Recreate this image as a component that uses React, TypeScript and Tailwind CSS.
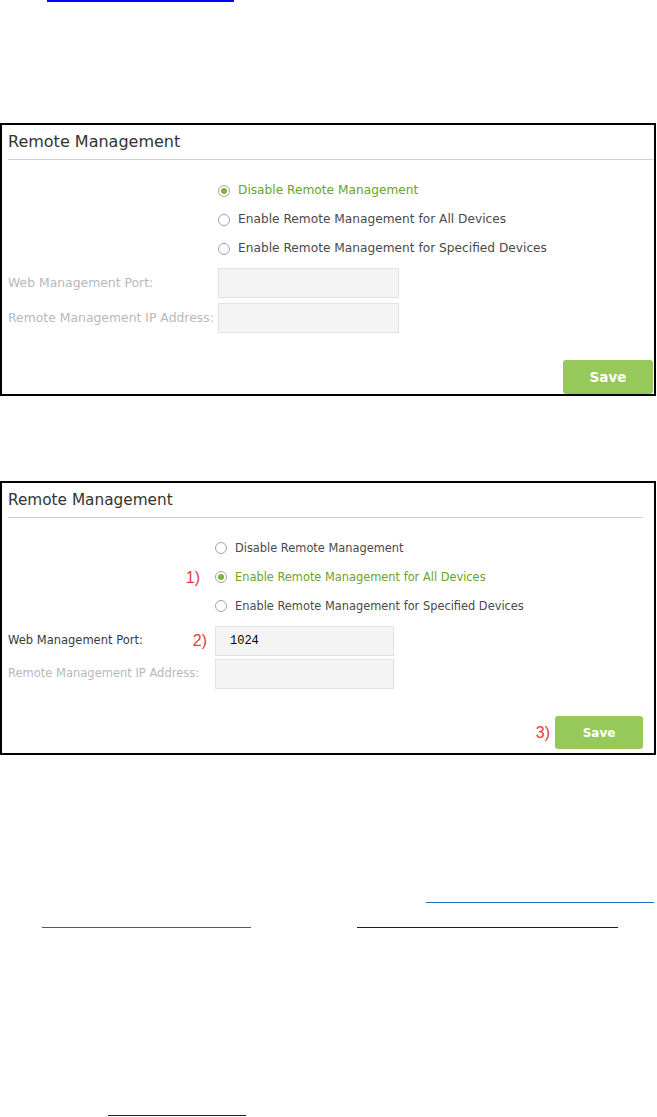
import React from 'react'

const font = "font-['DejaVu_Sans',Verdana,sans-serif]"

function Radio({ checked }: { checked?: boolean }) {
  return (
    <span className="flex h-[12px] w-[12px] shrink-0 items-center justify-center rounded-full border border-[#a4a4a4] bg-white">
      {checked && <span className="h-[6px] w-[6px] rounded-full bg-[#7ab33e]" />}
    </span>
  )
}

function Mark({ n }: { n: string }) {
  return (
    <span className="font-['Liberation_Sans',Arial,sans-serif] text-[16px] leading-none text-[#e8383d]">
      {n})
    </span>
  )
}

const options = [
  'Disable Remote Management',
  'Enable Remote Management for All Devices',
  'Enable Remote Management for Specified Devices',
]

/**
 * 1枚目：リモート管理が無効の状態
 */
function PanelDisabled() {
  return (
    <div className={`w-[656px] border-2 border-black bg-white ${font}`}>
      {/* タイトル */}
      <div className="pl-[6px] pt-[6px] text-[16px] leading-[22px] text-[#333]">Remote Management</div>
      <div className="ml-[6px] mr-px mt-[6px] h-px bg-[#cfcfcf]" />

      {/* ラジオ */}
      <div className="ml-[216px] mt-[16px]">
        {options.map((o, i) => (
          <div key={o} className="flex h-[29px] items-center gap-[8px]">
            <Radio checked={i === 0} />
            <span className={`text-[12.2px] ${i === 0 ? 'text-[#6aa329]' : 'text-[#4a4a4a]'}`}>{o}</span>
          </div>
        ))}
      </div>

      {/* 入力欄 */}
      <div className="mt-[5px] flex flex-col gap-[5px] pl-[6px]">
        <div className="flex items-center">
          <span className="w-[210px] text-[12.4px] text-[#b8b8b8]">Web Management Port:</span>
          <div className="h-[30px] w-[181px] border border-[#e2e2e2] bg-[#f4f4f4]" />
        </div>
        <div className="flex items-center">
          <span className="w-[210px] text-[12.4px] text-[#b8b8b8]">Remote Management IP Address:</span>
          <div className="h-[30px] w-[181px] border border-[#e2e2e2] bg-[#f4f4f4]" />
        </div>
      </div>

      {/* 保存 */}
      <div className="mr-px mt-[27px] flex justify-end">
        <button className="h-[34px] w-[90px] rounded-[3px] bg-[#97c95a] text-[13.5px] font-bold text-white">Save</button>
      </div>
    </div>
  )
}

/**
 * 2枚目：全デバイスに対して有効化
 */
function PanelEnabled() {
  return (
    <div className={`w-[656px] border-2 border-black bg-white pb-[4px] ${font}`}>
      <div className="pl-[6px] pt-[7px] text-[15.3px] leading-[21px] text-[#333]">Remote Management</div>
      <div className="ml-[6px] mr-[11px] mt-[6px] h-px bg-[#cfcfcf]" />

      <div className="mt-[16px] pl-[6px]">
        {options.map((o, i) => (
          <div key={o} className="flex h-[29px] items-center">
            <div className="flex w-[207px] justify-end pr-[15px]">{i === 1 && <Mark n="1" />}</div>
            <div className="flex items-center gap-[8px]">
              <Radio checked={i === 1} />
              <span className={`text-[11.4px] ${i === 1 ? 'text-[#6aa329]' : 'text-[#4a4a4a]'}`}>{o}</span>
            </div>
          </div>
        ))}
      </div>

      <div className="mt-[5px] flex flex-col gap-[3px] pl-[6px]">
        <div className="flex items-center">
          <div className="flex w-[207px] items-center justify-between pr-[8px]">
            <span className="text-[11.5px] text-[#3a3a3a]">Web Management Port:</span>
            <Mark n="2" />
          </div>
          <div className="flex h-[30px] w-[179px] items-center border border-[#e2e2e2] bg-[#f4f4f4] pl-[14px] font-['Liberation_Mono',monospace] text-[12px] text-black">
            1024
          </div>
        </div>
        <div className="flex items-center">
          <span className="w-[207px] text-[11.5px] text-[#b8b8b8]">Remote Management IP Address:</span>
          <div className="h-[30px] w-[179px] border border-[#e2e2e2] bg-[#f4f4f4]" />
        </div>
      </div>

      <div className="mr-[11px] mt-[27px] flex items-center justify-end gap-[5px]">
        <Mark n="3" />
        <button className="h-[33px] w-[88px] rounded-[3px] bg-[#97c95a] text-[12px] font-bold text-white">Save</button>
      </div>
    </div>
  )
}

export default function App() {
  return (
    <div className="flex min-h-[1117px] w-[657px] flex-col bg-white">
      {/* リンク下線 */}
      <div className="ml-[47px] h-[2px] w-[187px] bg-[#0000ff]" />

      <div className="mt-[121px]">
        <PanelDisabled />
      </div>

      <div className="mt-[85px]">
        <PanelEnabled />
      </div>

      <div className="ml-[426px] mt-[147px] h-px w-[228px] bg-[#1f6fb5]" />
      <div className="mt-[24px] flex">
        <div className="ml-[42px] h-px w-[209px] bg-[#0070c0]" />
        <div className="ml-[106px] h-px w-[261px] bg-[#0000ff]" />
      </div>

      <div className="ml-[108px] mt-[187px] h-px w-[138px] bg-[#0000ff]" />
    </div>
  )
}
